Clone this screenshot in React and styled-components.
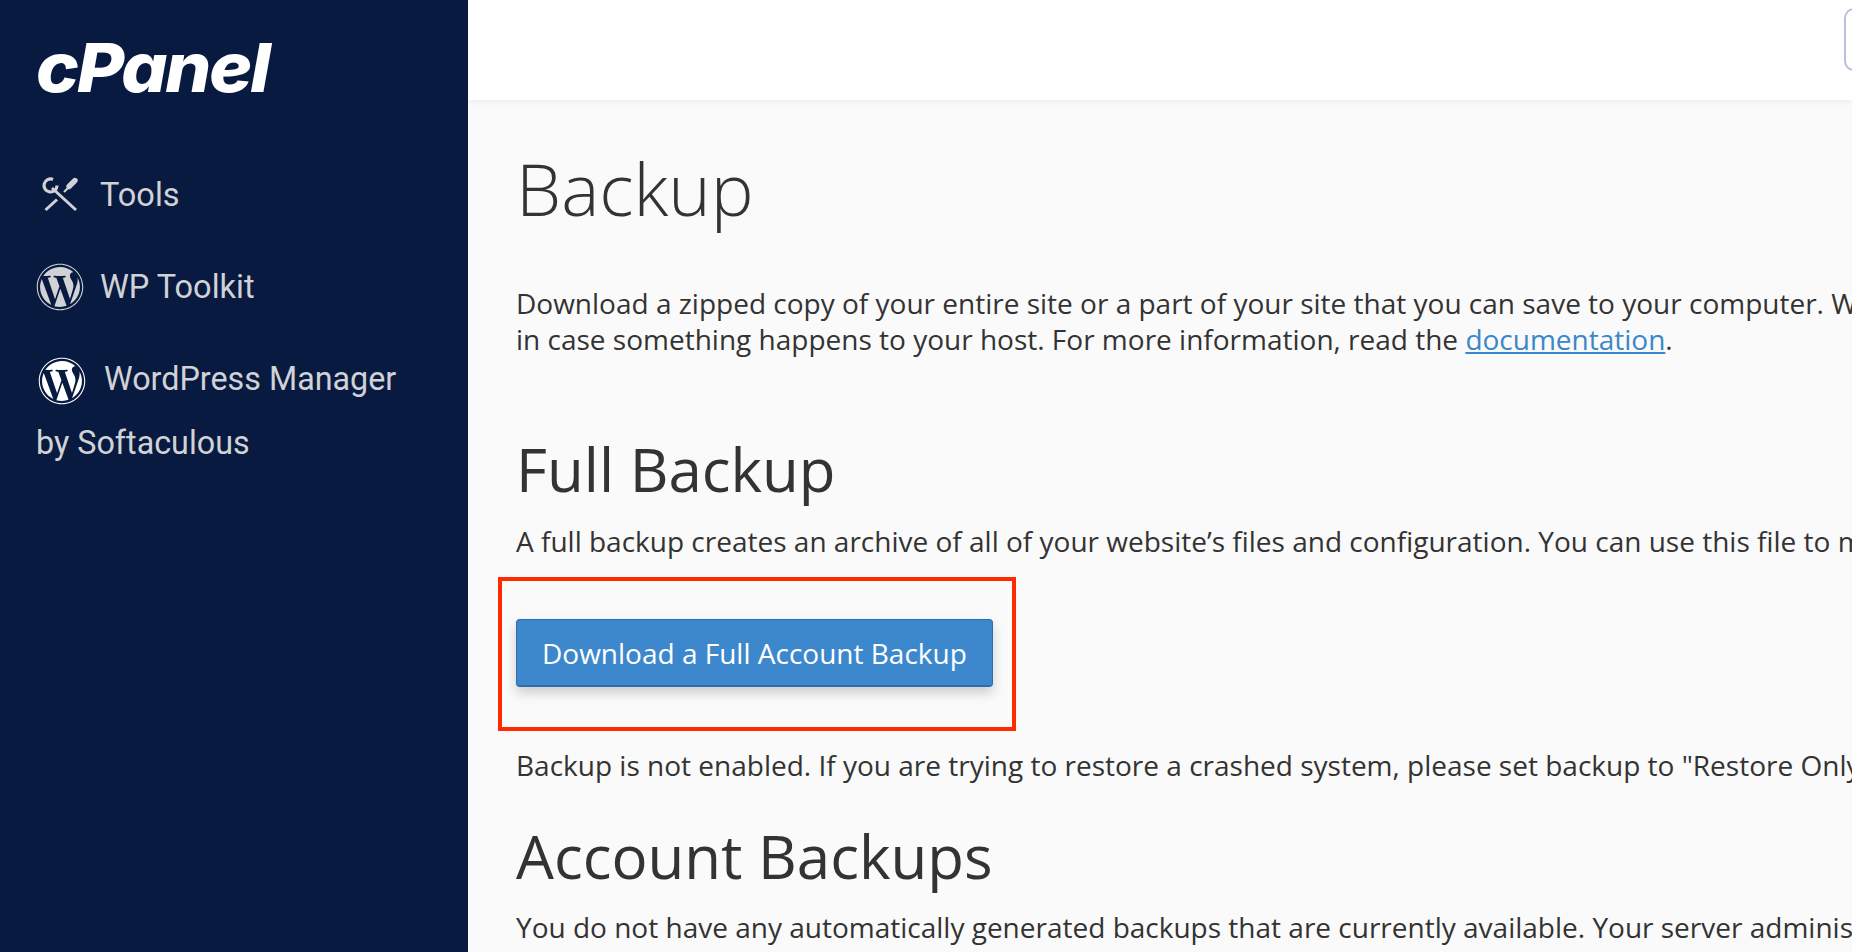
import React from 'react'
import styled, { createGlobalStyle } from 'styled-components'
import { FaWordpress } from 'react-icons/fa'

const GlobalStyle = createGlobalStyle`
  html, body {
    margin: 0;
    padding: 0;
    height: 100%;
    overflow: hidden;
  }
  #root {
    height: 100%;
  }
`

const Page = styled.div`
  display: flex;
  width: 1852px;
  height: 952px;
  overflow: hidden;
  background: #fafafa;
  font-family: "Open Sans", "Liberation Sans", sans-serif;
  color: #333;
`

const Sidebar = styled.aside`
  flex: 0 0 468px;
  background: #091a40;
  padding: 32px 36px 0;
  box-sizing: border-box;
  font-family: Roboto, "Liberation Sans", sans-serif;
  color: #d0d2d6;
`

const Logo = styled.div`
  font-family: Inter, "Liberation Sans", sans-serif;
  font-size: 68px;
  font-weight: 800;
  font-style: italic;
  letter-spacing: -2px;
  line-height: 70px;
  color: #fff;
  margin-bottom: 69px;
  transform: scaleX(1.065);
  transform-origin: left center;
`

const NavItem = styled.a`
  display: flex;
  align-items: center;
  gap: 16px;
  height: 48px;
  font-size: 32.5px;
  margin-bottom: ${p => p.$bottom}px;
`

const NavBlock = styled.a`
  display: block;
  font-size: 32.3px;
  line-height: 64px;

  svg {
    vertical-align: middle;
    margin: 0 18px 0 2px;
    color: #fff;
  }
`

const IconSlot = styled.span`
  display: flex;
  justify-content: center;
  width: 48px;
`

const ToolsIcon = () => (
  <svg width="38" height="38" viewBox="10 10 38 38" fill="none" stroke="#d0d2d6" strokeWidth="3">
    <path d="M21 22 L45 44" />
    <path d="M22 13.5 A6.5 6.5 0 1 0 26 19.5" strokeWidth="3.2" />
    <path d="M33 26 L38 21" strokeWidth="2.2" />
    <path d="M38 20.5 L44 14.5" strokeWidth="5.4" strokeLinecap="round" />
    <path d="M14.5 44 L26 33.5" />
  </svg>
)

const Main = styled.main`
  flex: 1;
  min-width: 0;
  overflow: hidden;
`

const Header = styled.header`
  display: flex;
  justify-content: flex-end;
  align-items: center;
  height: 100px;
  background: #fff;
  box-shadow: 0 1px 6px rgba(0, 0, 0, 0.08);
`

const HeaderBox = styled.div`
  flex: 0 0 60px;
  height: 63px;
  margin-right: -52px;
  margin-top: -21px;
  box-sizing: border-box;
  border: 2px solid #b6c2d9;
  border-radius: 10px;
`

const Content = styled.div`
  padding: 44px 0 0 48px;
  white-space: nowrap;
`

const Title = styled.h1`
  font-size: 72px;
  font-weight: 300;
  line-height: 88px;
  margin: 0 0 53px;
`

const Text = styled.p`
  font-size: 28px;
  line-height: 36px;
  margin: 0;
`

const DocLink = styled.a`
  color: #3a87c9;
  text-decoration: underline;
`

const Heading = styled.h2`
  font-size: 60px;
  font-weight: 400;
  line-height: 68px;
  margin: ${p => p.$top}px 0 ${p => p.$bottom}px;
`

const ButtonWrap = styled.div`
  position: relative;
  width: fit-content;
  margin: 60px 0 60px;
`

const PrimaryButton = styled.button`
  display: block;
  height: 68px;
  padding: 0 25px;
  background: #3d88cd;
  border: 1px solid #2d6fae;
  border-bottom-width: 2px;
  border-radius: 4px;
  box-shadow: 0 6px 12px rgba(0, 0, 0, 0.18);
  color: #fff;
  font-family: "Open Sans", "Liberation Sans", sans-serif;
  font-size: 28px;
`

const Highlight = styled.div`
  position: absolute;
  left: -18px;
  top: -42px;
  width: 518px;
  height: 154px;
  box-sizing: border-box;
  border: 4px solid #ff2a00;
  pointer-events: none;
`

export default function App() {
  return (
    <>
      <GlobalStyle />
      <Page>
        <Sidebar>
          <Logo>cPanel</Logo>
          <NavItem $bottom={44}><IconSlot><ToolsIcon /></IconSlot>Tools</NavItem>
          <NavItem $bottom={36}><IconSlot><FaWordpress size={48} /></IconSlot>WP Toolkit</NavItem>
          <NavBlock><FaWordpress size={48} />WordPress Manager<br />by Softaculous</NavBlock>
        </Sidebar>
        <Main>
          <Header><HeaderBox /></Header>
          <Content>
            <Title>Backup</Title>
            <Text>
              Download a zipped copy of your entire site or a part of your site that you can save to your computer. When you back up your website<br />
              in case something happens to your host. For more information, read the <DocLink>documentation</DocLink>.
            </Text>
            <Heading $top={78} $bottom={20}>Full Backup</Heading>
            <Text>A full backup creates an archive of all of your website’s files and configuration. You can use this file to move your account to another server</Text>
            <ButtonWrap>
              <PrimaryButton>Download a Full Account Backup</PrimaryButton>
              <Highlight />
            </ButtonWrap>
            <Text>Backup is not enabled. If you are trying to restore a crashed system, please set backup to "Restore Only" to restore your account</Text>
            <Heading $top={39} $bottom={19}>Account Backups</Heading>
            <Text>You do not have any automatically generated backups that are currently available. Your server administrator can enable them for you</Text>
          </Content>
        </Main>
      </Page>
    </>
  )
}
